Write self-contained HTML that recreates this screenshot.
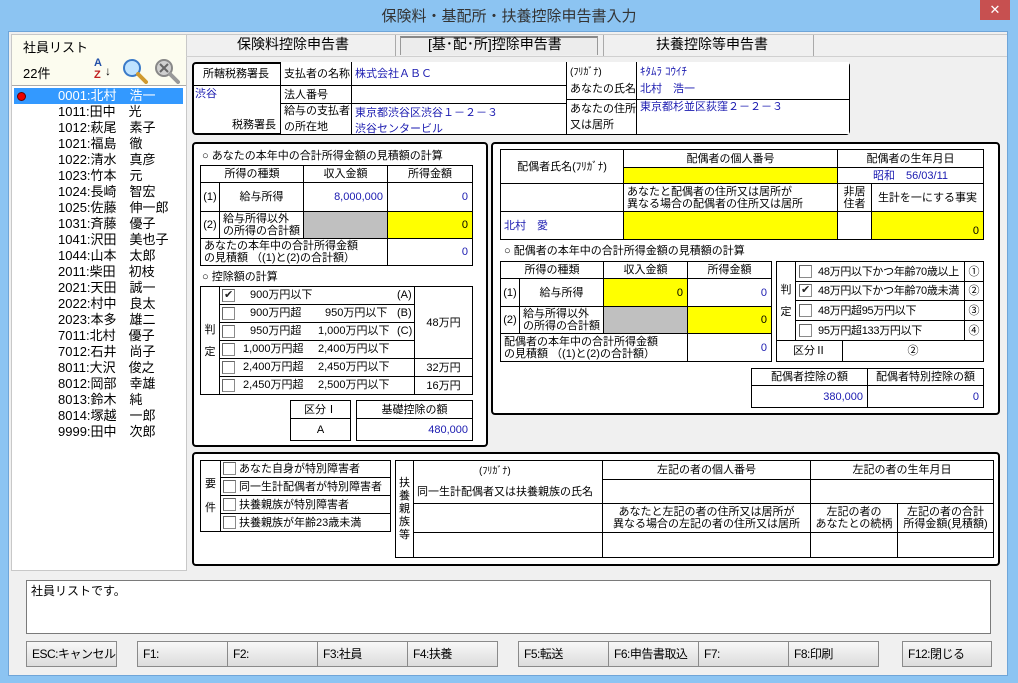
<!DOCTYPE html>
<html><head><meta charset="utf-8">
<style>
*{margin:0;padding:0}
body{width:1018px;height:683px;position:relative;overflow:hidden;background:#8cc4f2;font-family:"Liberation Sans","Noto Sans CJK JP",sans-serif;font-size:11px;color:#000}
div,span{position:absolute;box-sizing:border-box}
.b{border:1px solid #000;background:#fff;display:flex;align-items:center;justify-content:center;line-height:12px;white-space:nowrap;overflow:hidden}
.l{justify-content:flex-start;padding-left:3px}
.r{justify-content:flex-end;padding-right:4px}
.y{background:#ff0}.g{background:#c0c0c0}
.bl{color:#1a1ab0}
.box{border:2px solid #000;border-radius:4px;background:#fff}
.t{white-space:nowrap;line-height:14px}
.cb{width:13px;height:13px;border:1px solid #8a8a8a;background:#fff;border-top-color:#666;border-left-color:#666}
.cb.k::after{content:"✔";position:absolute;left:1px;top:-2px;font-size:11px;color:#222}
.btn{top:641px;height:26px;border:1px solid #8a8a8a;background:linear-gradient(#f8f8f8,#dcdcdc);font-size:12px;line-height:24px;padding-left:5px;white-space:nowrap;overflow:hidden;letter-spacing:-0.5px}
.row{left:14px;width:169px;height:16px;font-size:13px;line-height:16px;white-space:nowrap}
.row span{left:44px;position:absolute}
.j{letter-spacing:-0.3px;padding-left:22px}
</style></head><body>
<div style="left:0;top:0;width:1018px;height:31px;text-align:center;font-size:15px;line-height:34px;color:#333">保険料・基配所・扶養控除申告書入力</div>
<div style="left:980px;top:0;width:30px;height:20px;background:#c75050;color:#fff;text-align:center;font-size:13px;line-height:20px">✕</div>
<div style="left:8px;top:31px;width:1000px;height:645px;background:#f0f0f0;border:1px solid #6fa5d8"></div>

<!-- left panel -->
<div style="left:11px;top:34px;width:176px;height:537px;border:1px solid #c8c8c8;background:#fff"></div>
<div style="left:12px;top:35px;width:174px;height:51px;background:#fcfcef;border-bottom:1px solid #aaa"></div>
<span class="t" style="left:23px;top:41px;font-size:13px">社員リスト</span>
<span class="t" style="left:23px;top:67px;font-size:13px">22件</span>
<span style="left:94px;top:58px;font-size:11px;font-weight:bold;color:#2250a8;line-height:11px">A</span>
<span style="left:94px;top:70px;font-size:11px;font-weight:bold;color:#c02020;line-height:11px">Z</span>
<span style="left:105px;top:64px;font-size:12px;line-height:14px">↓</span>
<svg style="position:absolute;left:122px;top:58px" width="26" height="26"><circle cx="10" cy="10" r="8" fill="#bfe3ff" stroke="#3a7ac8" stroke-width="2"/><line x1="16" y1="16" x2="24" y2="24" stroke="#d09a30" stroke-width="4" stroke-linecap="round"/></svg>
<svg style="position:absolute;left:154px;top:58px" width="26" height="26"><circle cx="10" cy="10" r="8" fill="#d0d0d0" stroke="#888" stroke-width="2"/><line x1="6" y1="6" x2="14" y2="14" stroke="#666" stroke-width="2"/><line x1="14" y1="6" x2="6" y2="14" stroke="#666" stroke-width="2"/><line x1="16" y1="16" x2="24" y2="24" stroke="#999" stroke-width="4" stroke-linecap="round"/></svg>
<div style="left:12px;top:87px;width:174px;height:483px;background:#fff"></div>
<div class="row" style="top:88px;background:#3399ff;color:#fff"><span>0001:北村　浩一</span></div>
<div style="left:17px;top:92px;width:9px;height:9px;border-radius:50%;background:#e00;border:1px solid #600"></div>
<div class="row" style="top:104px"><span>1011:田中　光</span></div>
<div class="row" style="top:120px"><span>1012:萩尾　素子</span></div>
<div class="row" style="top:136px"><span>1021:福島　徹</span></div>
<div class="row" style="top:152px"><span>1022:清水　真彦</span></div>
<div class="row" style="top:168px"><span>1023:竹本　元</span></div>
<div class="row" style="top:184px"><span>1024:長崎　智宏</span></div>
<div class="row" style="top:200px"><span>1025:佐藤　伸一郎</span></div>
<div class="row" style="top:216px"><span>1031:斉藤　優子</span></div>
<div class="row" style="top:232px"><span>1041:沢田　美也子</span></div>
<div class="row" style="top:248px"><span>1044:山本　太郎</span></div>
<div class="row" style="top:264px"><span>2011:柴田　初枝</span></div>
<div class="row" style="top:280px"><span>2021:天田　誠一</span></div>
<div class="row" style="top:296px"><span>2022:村中　良太</span></div>
<div class="row" style="top:312px"><span>2023:本多　雄二</span></div>
<div class="row" style="top:328px"><span>7011:北村　優子</span></div>
<div class="row" style="top:344px"><span>7012:石井　尚子</span></div>
<div class="row" style="top:360px"><span>8011:大沢　俊之</span></div>
<div class="row" style="top:376px"><span>8012:岡部　幸雄</span></div>
<div class="row" style="top:392px"><span>8013:鈴木　純</span></div>
<div class="row" style="top:408px"><span>8014:塚越　一郎</span></div>
<div class="row" style="top:424px"><span>9999:田中　次郎</span></div>

<!-- tabs -->
<div style="left:186px;top:34px;width:821px;height:537px;border-left:1px solid #c8c8c8;border-top:1px solid #c8c8c8"></div>
<div style="left:186px;top:56px;width:821px;height:1px;background:#d0d0d0"></div>
<span class="t" style="left:237px;top:37px;font-size:14px">保険料控除申告書</span>
<div style="left:395px;top:35px;width:1px;height:21px;background:#aaa"></div>
<div style="left:400px;top:36px;width:198px;height:19px;border:1px solid #999;border-bottom:none;background:#ececec;border-top:2px solid #888"></div>
<span class="t" style="left:428px;top:37px;font-size:14px">[基･配･所]控除申告書</span>
<div style="left:603px;top:35px;width:1px;height:21px;background:#aaa"></div>
<span class="t" style="left:656px;top:37px;font-size:14px">扶養控除等申告書</span>
<div style="left:813px;top:35px;width:1px;height:21px;background:#aaa"></div>

<!-- top box -->
<div class="box" style="left:192px;top:62px;width:658px;height:73px"></div>
<div class="b" style="left:192px;top:62px;width:89px;height:24px;border-left:none;border-top:none;background:transparent">所轄税務署長</div>
<div style="left:280px;top:62px;width:1px;height:72px;background:#000"></div>
<span class="t bl" style="left:195px;top:87px">渋谷</span>
<span class="t" style="left:232px;top:118px">税務署長</span>
<div class="b l" style="left:280px;top:62px;width:72px;height:24px;border-top:none">支払者の名称</div>
<div class="b l bl" style="left:351px;top:62px;width:216px;height:24px;border-top:none">株式会社ＡＢＣ</div>
<div class="b l" style="left:280px;top:85px;width:72px;height:19px">法人番号</div>
<div class="b l" style="left:351px;top:85px;width:216px;height:19px"></div>
<div class="b l" style="left:280px;top:103px;width:72px;height:31px;border-bottom:none;line-height:16px">給与の支払者<br>の所在地</div>
<div class="b l bl" style="left:351px;top:103px;width:216px;height:31px;border-bottom:none;align-items:flex-start;padding-top:1px;line-height:16px">東京都渋谷区渋谷１－２－３<br>渋谷センタービル</div>
<div class="b l" style="left:566px;top:62px;width:71px;height:38px;border-top:none;line-height:17px;font-size:10px"><span style="position:static">(ﾌﾘｶﾞﾅ)<br><span style="position:static;font-size:11px">あなたの氏名</span></span></div>
<div class="b l bl" style="left:636px;top:62px;width:213px;height:38px;border-top:none;border-right:none;line-height:17px">ｷﾀﾑﾗ ｺｳｲﾁ<br>北村　浩一</div>
<div class="b l" style="left:566px;top:99px;width:71px;height:35px;border-bottom:none;line-height:16px;align-items:flex-start;padding-top:1px">あなたの住所<br>又は居所</div>
<div class="b l bl" style="left:636px;top:99px;width:213px;height:35px;border-bottom:none;border-right:none;align-items:flex-start;padding-top:1px">東京都杉並区荻窪２－２－３</div>

<!-- left mid box -->
<div class="box" style="left:192px;top:142px;width:296px;height:305px"></div>
<div class="t" style="left:202px;top:149px">○ あなたの本年中の合計所得金額の見積額の計算</div>
<div class="b" style="left:200px;top:165px;width:104px;height:18px">所得の種類</div>
<div class="b" style="left:303px;top:165px;width:85px;height:18px">収入金額</div>
<div class="b" style="left:387px;top:165px;width:86px;height:18px">所得金額</div>
<div class="b" style="left:200px;top:182px;width:20px;height:30px">(1)</div>
<div class="b" style="left:219px;top:182px;width:85px;height:30px">給与所得</div>
<div class="b r bl" style="left:303px;top:182px;width:85px;height:30px">8,000,000</div>
<div class="b r bl" style="left:387px;top:182px;width:86px;height:30px">0</div>
<div class="b" style="left:200px;top:211px;width:20px;height:28px">(2)</div>
<div class="b l" style="left:219px;top:211px;width:85px;height:28px">給与所得以外<br>の所得の合計額</div>
<div class="b g" style="left:303px;top:211px;width:85px;height:28px"></div>
<div class="b r y" style="left:387px;top:211px;width:86px;height:28px">0</div>
<div class="b l" style="left:200px;top:238px;width:188px;height:28px">あなたの本年中の合計所得金額<br>の見積額 （(1)と(2)の合計額）</div>
<div class="b r bl" style="left:387px;top:238px;width:86px;height:28px">0</div>
<div class="t" style="left:202px;top:270px">○ 控除額の計算</div>
<div class="b" style="left:200px;top:286px;width:20px;height:109px;line-height:22px">判<br>定</div>
<div class="b" style="left:219px;top:286px;width:196px;height:19px"></div>
<div class="b" style="left:219px;top:304px;width:196px;height:19px"></div>
<div class="b" style="left:219px;top:322px;width:196px;height:19px"></div>
<div class="b" style="left:219px;top:340px;width:196px;height:19px"></div>
<div class="b" style="left:219px;top:358px;width:196px;height:19px"></div>
<div class="b" style="left:219px;top:376px;width:196px;height:19px"></div>
<div class="b" style="left:414px;top:286px;width:59px;height:73px">48万円</div>
<div class="b" style="left:414px;top:358px;width:59px;height:19px">32万円</div>
<div class="b" style="left:414px;top:376px;width:59px;height:19px">16万円</div>
<div class="cb k" style="left:222px;top:289px"></div>
<div class="cb" style="left:222px;top:307px"></div>
<div class="cb" style="left:222px;top:325px"></div>
<div class="cb" style="left:222px;top:343px"></div>
<div class="cb" style="left:222px;top:361px"></div>
<div class="cb" style="left:222px;top:379px"></div>
<span class="t" style="left:250px;top:288px">900万円以下</span><span class="t" style="left:397px;top:288px">(A)</span>
<span class="t" style="left:250px;top:306px">900万円超</span><span class="t" style="left:325px;top:306px">950万円以下</span><span class="t" style="left:397px;top:306px">(B)</span>
<span class="t" style="left:250px;top:324px">950万円超</span><span class="t" style="left:318px;top:324px">1,000万円以下</span><span class="t" style="left:397px;top:324px">(C)</span>
<span class="t" style="left:243px;top:342px">1,000万円超</span><span class="t" style="left:318px;top:342px">2,400万円以下</span>
<span class="t" style="left:243px;top:360px">2,400万円超</span><span class="t" style="left:318px;top:360px">2,450万円以下</span>
<span class="t" style="left:243px;top:378px">2,450万円超</span><span class="t" style="left:318px;top:378px">2,500万円以下</span>
<div class="b" style="left:290px;top:400px;width:61px;height:19px">区分Ⅰ</div>
<div class="b" style="left:290px;top:418px;width:61px;height:23px">A</div>
<div class="b" style="left:356px;top:400px;width:117px;height:19px">基礎控除の額</div>
<div class="b r bl" style="left:356px;top:418px;width:117px;height:23px">480,000</div>

<!-- right mid box -->
<div class="box" style="left:491px;top:142px;width:509px;height:273px"></div>
<div class="b" style="left:500px;top:149px;width:124px;height:35px">配偶者氏名(ﾌﾘｶﾞﾅ)</div>
<div class="b" style="left:623px;top:149px;width:215px;height:19px">配偶者の個人番号</div>
<div class="b y" style="left:623px;top:167px;width:215px;height:17px"></div>
<div class="b" style="left:837px;top:149px;width:147px;height:19px">配偶者の生年月日</div>
<div class="b bl" style="left:837px;top:167px;width:147px;height:17px">昭和　56/03/11</div>
<div class="b" style="left:500px;top:183px;width:124px;height:29px"></div>
<div class="b l" style="left:623px;top:183px;width:215px;height:29px">あなたと配偶者の住所又は居所が<br>異なる場合の配偶者の住所又は居所</div>
<div class="b" style="left:837px;top:183px;width:35px;height:29px">非居<br>住者</div>
<div class="b" style="left:871px;top:183px;width:113px;height:29px">生計を一にする事実</div>
<div class="b l bl" style="left:500px;top:211px;width:124px;height:29px">北村　愛</div>
<div class="b y" style="left:623px;top:211px;width:215px;height:29px"></div>
<div class="b" style="left:837px;top:211px;width:35px;height:29px"></div>
<div class="b r y" style="left:871px;top:211px;width:113px;height:29px;align-items:flex-end;padding-bottom:2px">0</div>
<div class="t" style="left:504px;top:244px">○ 配偶者の本年中の合計所得金額の見積額の計算</div>
<div class="b" style="left:500px;top:261px;width:104px;height:18px">所得の種類</div>
<div class="b" style="left:603px;top:261px;width:85px;height:18px">収入金額</div>
<div class="b" style="left:687px;top:261px;width:85px;height:18px">所得金額</div>
<div class="b" style="left:500px;top:278px;width:20px;height:29px">(1)</div>
<div class="b" style="left:519px;top:278px;width:85px;height:29px">給与所得</div>
<div class="b r y" style="left:603px;top:278px;width:85px;height:29px">0</div>
<div class="b r bl" style="left:687px;top:278px;width:85px;height:29px">0</div>
<div class="b" style="left:500px;top:306px;width:20px;height:28px">(2)</div>
<div class="b l" style="left:519px;top:306px;width:85px;height:28px">給与所得以外<br>の所得の合計額</div>
<div class="b g" style="left:603px;top:306px;width:85px;height:28px"></div>
<div class="b r y" style="left:687px;top:306px;width:85px;height:28px">0</div>
<div class="b l" style="left:500px;top:333px;width:188px;height:29px">配偶者の本年中の合計所得金額<br>の見積額 （(1)と(2)の合計額）</div>
<div class="b r bl" style="left:687px;top:333px;width:85px;height:29px">0</div>
<div class="b" style="left:776px;top:261px;width:20px;height:80px;line-height:22px">判<br>定</div>
<div class="b l j" style="left:795px;top:261px;width:170px;height:21px">48万円以下かつ年齢70歳以上</div>
<div class="b l j" style="left:795px;top:281px;width:170px;height:20px">48万円以下かつ年齢70歳未満</div>
<div class="b l j" style="left:795px;top:300px;width:170px;height:21px">48万円超95万円以下</div>
<div class="b l j" style="left:795px;top:320px;width:170px;height:21px">95万円超133万円以下</div>
<div class="b" style="left:964px;top:261px;width:20px;height:21px">①</div>
<div class="b" style="left:964px;top:281px;width:20px;height:20px">②</div>
<div class="b" style="left:964px;top:300px;width:20px;height:21px">③</div>
<div class="b" style="left:964px;top:320px;width:20px;height:21px">④</div>
<div class="cb" style="left:799px;top:265px"></div>
<div class="cb k" style="left:799px;top:284px"></div>
<div class="cb" style="left:799px;top:304px"></div>
<div class="cb" style="left:799px;top:324px"></div>
<div class="b" style="left:776px;top:340px;width:67px;height:22px">区分Ⅱ</div>
<div class="b" style="left:842px;top:340px;width:142px;height:22px">②</div>
<div class="b" style="left:751px;top:368px;width:117px;height:18px">配偶者控除の額</div>
<div class="b" style="left:867px;top:368px;width:117px;height:18px">配偶者特別控除の額</div>
<div class="b r bl" style="left:751px;top:385px;width:117px;height:23px">380,000</div>
<div class="b r bl" style="left:867px;top:385px;width:117px;height:23px">0</div>

<!-- bottom box -->
<div class="box" style="left:192px;top:452px;width:808px;height:114px"></div>
<div class="b" style="left:200px;top:460px;width:21px;height:72px;line-height:24px">要<br>件</div>
<div class="b l" style="left:220px;top:460px;width:171px;height:18px;padding-left:18px">あなた自身が特別障害者</div>
<div class="b l" style="left:220px;top:477px;width:171px;height:19px;padding-left:18px">同一生計配偶者が特別障害者</div>
<div class="b l" style="left:220px;top:495px;width:171px;height:19px;padding-left:18px">扶養親族が特別障害者</div>
<div class="b l" style="left:220px;top:513px;width:171px;height:19px;padding-left:18px">扶養親族が年齢23歳未満</div>
<div class="cb" style="left:223px;top:462px"></div>
<div class="cb" style="left:223px;top:480px"></div>
<div class="cb" style="left:223px;top:498px"></div>
<div class="cb" style="left:223px;top:516px"></div>
<div class="b" style="left:395px;top:460px;width:19px;height:98px;line-height:13px;white-space:normal;text-align:center">扶<br>養<br>親<br>族<br>等</div>
<div class="b" style="left:413px;top:460px;width:190px;height:44px;align-items:flex-start;justify-content:flex-start;flex-direction:column;padding:3px 0 0 3px;line-height:15px"><span style="position:static;padding-left:62px;font-size:10px">(ﾌﾘｶﾞﾅ)</span><span style="position:static;margin-top:6px">同一生計配偶者又は扶養親族の氏名</span></div>
<div class="b" style="left:413px;top:503px;width:190px;height:30px"></div>
<div class="b" style="left:413px;top:532px;width:190px;height:26px"></div>
<div class="b" style="left:602px;top:460px;width:209px;height:20px">左記の者の個人番号</div>
<div class="b" style="left:602px;top:479px;width:209px;height:25px"></div>
<div class="b" style="left:602px;top:503px;width:209px;height:30px;text-align:center">あなたと左記の者の住所又は居所が<br>異なる場合の左記の者の住所又は居所</div>
<div class="b" style="left:602px;top:532px;width:209px;height:26px"></div>
<div class="b" style="left:810px;top:460px;width:184px;height:20px">左記の者の生年月日</div>
<div class="b" style="left:810px;top:479px;width:184px;height:25px"></div>
<div class="b" style="left:810px;top:503px;width:88px;height:30px;text-align:center">左記の者の<br>あなたとの続柄</div>
<div class="b" style="left:897px;top:503px;width:97px;height:30px;text-align:center">左記の者の合計<br>所得金額(見積額)</div>
<div class="b" style="left:810px;top:532px;width:88px;height:26px"></div>
<div class="b" style="left:897px;top:532px;width:97px;height:26px"></div>

<!-- message -->
<div style="left:26px;top:580px;width:965px;height:54px;background:#fff;border:1px solid #7a7a7a;padding:2px 4px;font-size:12px;line-height:16px">社員リストです。</div>

<div class="btn" style="left:26px;width:91px">ESC:キャンセル</div>
<div class="btn" style="left:137px;width:91px">F1:</div>
<div class="btn" style="left:227px;width:91px">F2:</div>
<div class="btn" style="left:317px;width:91px">F3:社員</div>
<div class="btn" style="left:407px;width:91px">F4:扶養</div>
<div class="btn" style="left:518px;width:91px">F5:転送</div>
<div class="btn" style="left:608px;width:91px">F6:申告書取込</div>
<div class="btn" style="left:698px;width:91px">F7:</div>
<div class="btn" style="left:788px;width:91px">F8:印刷</div>
<div class="btn" style="left:902px;width:90px">F12:閉じる</div>
</body></html>
